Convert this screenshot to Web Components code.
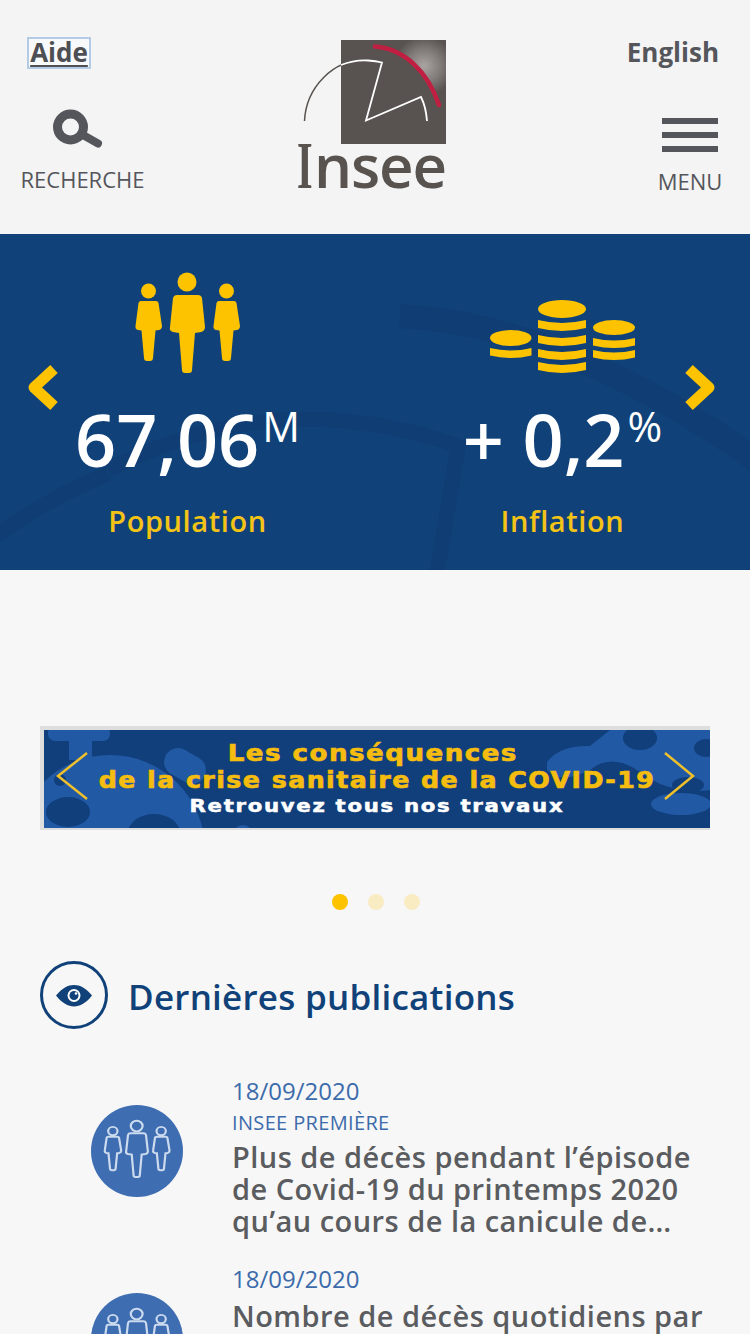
<!DOCTYPE html>
<html lang="fr">
<head>
<meta charset="utf-8">
<title>Insee</title>
<style>
html,body{margin:0;padding:0;height:1334px;overflow:hidden;background:#f7f7f7;font-family:"Open Sans",sans-serif}
insee-app{width:750px;height:1334px;overflow:hidden}
</style>
</head>
<body>
<insee-app>
  <insee-header></insee-header>
  <stat-banner>
    <stat-item kind="people" sup="M" value="67,06" label="Population"></stat-item>
    <stat-item kind="coins" sup="%" value="+ 0,2" label="Inflation"></stat-item>
  </stat-banner>
  <promo-carousel></promo-carousel>
  <section-title>Dernières publications</section-title>
  <pub-item date="18/09/2020" cat="INSEE PREMIÈRE">Plus de décès pendant l’épisode de Covid-19 du printemps 2020 qu’au cours de la canicule de…</pub-item>
  <pub-item date="18/09/2020">Nombre de décès quotidiens par</pub-item>
</insee-app>
<script>
const PEOPLE = `
<circle cx="187" cy="282" r="9.5"/>
<path d="M177 295H198Q201 295 202 298L205 327Q205 331 201 332L195 333L192 370Q192 373 189 373H185Q182 373 182 370L179 333L173 332Q169 331 170 327L173 298Q174 295 177 295Z"/>
<circle cx="148.500" cy="291" r="7.500"/>
<path d="M141 301H156Q158 301 158.500 303L162 326Q162 329 159 330L155.500 330.500L153 358Q153 361 150 361H147Q144 361 144 358L141.500 330.500L138 330Q135 329 135.500 326L138.500 303Q139 301 141 301Z"/>
<circle cx="226.500" cy="291" r="7.500"/>
<path d="M219 301H234Q236 301 236.500 303L240 326Q240 329 237 330L233.500 330.500L231 358Q231 361 228 361H225Q222 361 222 358L219.500 330.500L216 330Q213 329 213.500 326L216.500 303Q217 301 219 301Z"/>`;

function band(x0,x1,y0,y1,d){
  const c=(x0+x1)/2;
  return `M${x0} ${y0}Q${c} ${y0+d*2} ${x1} ${y0}V${y1-d}Q${c} ${y1+d} ${x0} ${y1-d}Z`;
}
function coinTop(x0,x1,y0,y1){
  const r=(x1-x0)/2,ry=(y1-y0)/2;
  return `<ellipse cx="${x0+r}" cy="${y0+ry}" rx="${r}" ry="${ry}"/>`;
}
const COINS = coinTop(538,586,300,318)+`<path d="${band(538,586,320,331,3)}"/><path d="${band(538,586,335,346,3)}"/><path d="${band(538,586,349,360,3)}"/><path d="${band(538,586,362,373,3)}"/>`
 + coinTop(490,531.500,330,346)+`<path d="${band(490,531.500,348,358,2.500)}"/>`
 + coinTop(593,635,320,335)+`<path d="${band(593,635,338,348,2.500)}"/><path d="${band(593,635,350,360,2.500)}"/>`;

class Base extends HTMLElement{
  render(html){ (this.shadowRoot||this.attachShadow({mode:"open"})).innerHTML = html; }
}

customElements.define("insee-app", class extends Base{
  connectedCallback(){ this.render(`<style>:host{display:block;color:#54565b}</style><slot></slot>`); }
});

customElements.define("insee-logo", class extends Base{
  connectedCallback(){ this.render(`<style>:host{display:block;width:160px;height:160px}svg{display:block;overflow:visible}
  text{font-family:"Open Sans",sans-serif;font-size:60px;font-weight:600;letter-spacing:-1.100px;fill:#58534f}
  text.i{font-family:"Liberation Serif",serif;font-size:67px;font-weight:700;letter-spacing:0}</style>
  <svg width="160" height="160" viewBox="292 35 160 160" role="img" aria-label="Insee">
    <defs>
      <radialGradient id="g" cx="424" cy="66" r="30" gradientUnits="userSpaceOnUse">
        <stop offset="0" stop-color="#aaa5a3"/><stop offset=".55" stop-color="#807b79"/><stop offset="1" stop-color="#585350"/>
      </radialGradient>
      <clipPath id="sq"><rect x="341" y="40" width="105" height="104"/></clipPath>
    </defs>
    <rect x="341" y="40" width="105" height="104" fill="#585350"/>
    <path d="M382 47Q414 52 439 106L446 106V40H382Z" fill="url(#g)" clip-path="url(#sq)"/>
    <path d="M304.500 121C306 88 333 58 368 60.500Q376 61 382 62.500" fill="none" stroke="#58534f" stroke-width="1.500"/>
    <path d="M341 65C351 61 360 60 368 60.500Q376 61 382 62.500L366 120.500L421 97Q426 107 427 121" fill="none" stroke="#fff" stroke-width="1.800"/>
    <path d="M375 46.500C405 49 428 72 439 105" fill="none" stroke="#c01f42" stroke-width="4.500" stroke-linecap="round"/>
    <text class="i" transform="translate(297 188) scale(.6 1)">I</text>
    <text x="314" y="188">nsee</text>
  </svg>`); }
});

customElements.define("insee-header", class extends Base{
  connectedCallback(){ this.render(`<style>
  :host{display:grid;grid-template-columns:165px 1fr 120px;height:234px;background:#f4f4f4;color:#54565b;font-family:"Open Sans",sans-serif;box-sizing:border-box}
  .l{display:flex;flex-direction:column;align-items:center}
  .aide{align-self:flex-start;margin:37px 0 0 27px;box-sizing:border-box;width:64px;height:32px;border:2px solid #b4cbe6;background:#f8f9fb;display:flex;align-items:center;justify-content:center;padding-bottom:2px;
    font-weight:700;font-size:26px;line-height:30px;text-decoration:underline;color:#4d4f54;text-decoration-thickness:2px;text-underline-offset:3px}
  .s{margin:39px 0 0 -10px;display:block;overflow:visible}
  .t{font-size:22px;line-height:30px;color:#54565b}
  .l .t{margin-top:16px}
  .c{display:flex;justify-content:flex-start;padding:40px 0 0 132px;width:161px}
  .r{display:flex;flex-direction:column;align-items:center}
  .en{align-self:flex-end;margin:36px 31px 0 0;font-weight:700;font-size:26px;line-height:32px;white-space:nowrap}
  .m{width:56px;margin-top:50px;display:flex;flex-direction:column;gap:8px}
  .m i{display:block;height:6px;background:#54565b}
  .t2{margin-top:14px}
  </style>
  <div class="l">
    <a class="aide">Aide</a>
    <svg class="s" width="50" height="40" viewBox="0 0 50 40"><circle cx="17.500" cy="19" r="13" fill="none" stroke="#54565b" stroke-width="9"/><path d="M30 27L45 35.500" stroke="#54565b" stroke-width="8" stroke-linecap="round"/></svg>
    <div class="t">RECHERCHE</div>
  </div>
  <div><div class="c"><insee-logo style="margin:-5px 0 0 -5px"></insee-logo></div></div>
  <div class="r">
    <div class="en">English</div>
    <div class="m"><i></i><i></i><i></i></div>
    <div class="t t2">MENU</div>
  </div>`); }
});

customElements.define("stat-banner", class extends Base{
  connectedCallback(){ this.render(`<style>
  :host{display:grid;grid-template-columns:375px 375px;height:336px;background:#104279;position:relative;overflow:hidden;margin-bottom:156px}
  svg{position:absolute;left:0;top:0}
  ::slotted(*){position:relative}
  </style>
  <svg width="750" height="336" viewBox="0 234 750 336">
    <g fill="none" stroke="#0f3d74" stroke-width="15">
      <path d="M-10 540Q48 498 108 474"/>
      <path d="M108 470Q240 402 375 425Q420 432 458 446L437 572"/>
      <path d="M400 316Q570 325 770 470" stroke-width="24"/>
    </g>
    <g fill="none" stroke="#fdc300" stroke-width="11" stroke-linejoin="round">
      <path d="M54 369L34 387.500L54 406"/>
      <path d="M689 369L709 387.500L689 406"/>
    </g>
  </svg>
  <slot></slot>`); }
});

customElements.define("stat-item", class extends Base{
  connectedCallback(){
    const k=this.getAttribute("kind");
    const art = k==="people"
      ? `<svg width="106" height="102" viewBox="135 272 106 102" fill="#fdc300">${PEOPLE}</svg>`
      : `<svg width="146" height="74" viewBox="490 300 146 74" fill="#fdc300">${COINS}</svg>`;
    this.render(`<style>
    :host{display:flex;flex-direction:column;align-items:center;font-family:"Open Sans",sans-serif}
    .i{height:102px;margin-top:38px;display:flex;align-items:flex-end}
    svg{display:block}
    .v{color:#fff;font-size:72px;font-weight:600;line-height:98px;margin-top:16px;white-space:nowrap;position:relative;display:flex}
    sup{font-size:42px;font-weight:400;line-height:42px;display:block;margin:15px 0 0 3px}
    .l{color:#f3c316;font-size:29px;font-weight:600;line-height:36px;margin-top:15px;letter-spacing:.6px}
    </style>
    <div class="i">${art}</div>
    <div class="v"><span>${this.getAttribute("value")}</span><sup>${this.getAttribute("sup")}</sup></div>
    <div class="l">${this.getAttribute("label")}</div>`);
  }
});

customElements.define("promo-carousel", class extends Base{
  connectedCallback(){ this.render(`<style>
  :host{display:block;font-family:"DejaVu Sans",sans-serif}
  .wrap{box-sizing:border-box;margin-left:40px;width:670px;height:104px;border:solid #dedede;border-width:4px 0 2px 4px;background:#113f7c;position:relative;overflow:hidden;
    display:flex;flex-direction:column;align-items:center;font-weight:700}
  svg{position:absolute;left:0;top:0}
  .a,.b,.c{position:relative;white-space:nowrap}
  .a,.b{color:#f5bd0f;font-size:23px;line-height:27px;letter-spacing:1.300px;-webkit-text-stroke:.7px #f5bd0f}
  .a{margin-top:10px;transform:translateX(-4px) scaleX(1.135)}
  .b{transform:scaleX(1.1)}
  .c{color:#fff;font-size:17px;line-height:24px;letter-spacing:1.350px;transform:scaleX(1.25);-webkit-text-stroke:.5px #fff}
  .dots{display:flex;gap:20px;justify-content:center;margin:64px 0 0 2px}
  .dots i{width:16px;height:16px;border-radius:50%;background:#f9ebc2}
  .dots i:first-child{background:#fdc300}
  </style>
  <div class="wrap">
    <svg width="666" height="98" viewBox="44 730 666 98">
      <rect x="44" y="730" width="666" height="98" fill="#113f7c"/>
      <g fill="#2159a4">
        <circle cx="110" cy="850" r="95"/>
        <rect x="69" y="730" width="23" height="30"/>
        <rect x="48" y="726" width="62" height="15" rx="7"/>
        <rect x="163" y="752" width="44" height="28" rx="14" transform="rotate(30 185 766)"/>
        <circle cx="243" cy="835" r="10"/>
        <path d="M547 762Q560 745 590 746L610 730H710V790Q670 795 640 772Q612 752 590 770Q560 785 547 770Z"/>
        <ellipse cx="681" cy="804" rx="30" ry="11"/>
      </g>
      <g fill="#113f7c">
        <ellipse cx="68" cy="812" rx="22" ry="15"/>
        <ellipse cx="154" cy="833" rx="26" ry="19"/>
        <circle cx="60" cy="780" r="6"/>
        <ellipse cx="640" cy="738" rx="17" ry="12"/>
        <ellipse cx="706" cy="748" rx="12" ry="9"/>
        <ellipse cx="688" cy="785" rx="16" ry="8"/>
      </g>
      <g fill="none" stroke="#f0c02c" stroke-width="2.500">
        <path d="M87 753L58 776L87 799"/>
        <path d="M665 753L693 776L665 799"/>
      </g>
    </svg>
    <div class="a">Les conséquences</div>
    <div class="b">de la crise sanitaire de la COVID-19</div>
    <div class="c">Retrouvez tous nos travaux</div>
  </div>
  <div class="dots"><i></i><i></i><i></i></div>`); }
});

customElements.define("section-title", class extends Base{
  connectedCallback(){ this.render(`<style>
  :host{display:flex;align-items:flex-start;gap:20px;margin:51px 0 0 40px;color:#104279;font-family:"Open Sans",sans-serif;font-size:35px;font-weight:600;line-height:68px;letter-spacing:.24px;height:68px}
  svg{display:block;flex:none}
  span{display:block;padding-top:2px}
  </style>
  <svg width="68" height="68" viewBox="0 0 68 68">
    <circle cx="34" cy="34" r="32.500" fill="none" stroke="#104279" stroke-width="3"/>
    <path d="M16 34.500C22 27 28 24 34 24S46 27 52 34.500C46 42 40 45.500 34 45.500S22 42 16 34.500Z" fill="#104279"/>
    <circle cx="34" cy="34.500" r="6.500" fill="#fff"/>
    <circle cx="34" cy="34.500" r="4.500" fill="#104279"/>
    <circle cx="36" cy="32.500" r="1.300" fill="#fff"/>
  </svg>
  <span><slot></slot></span>`); }
});

customElements.define("pub-item", class extends Base{
  connectedCallback(){
    const cat=this.getAttribute("cat");
    this.render(`<style>
    :host{display:grid;grid-template-columns:192px 1fr;margin-left:40px;width:680px;height:188px;font-family:"Open Sans",sans-serif}
    :host(:first-of-type){margin-top:49px}
    .p{width:92px;height:92px;margin:27px 0 0 51px;display:block}
    .d{color:#3c6bab;font-size:24px;line-height:26px}
    .k{color:#3c6bab;font-size:20px;line-height:28px;margin-top:5px;letter-spacing:.35px}
    .t{color:#5a5c60;font-size:29px;font-weight:600;line-height:32px;letter-spacing:.47px;max-width:476px;margin-top:${cat?'4':'8'}px}
    </style>
    <svg class="p" viewBox="0 0 92 92">
      <circle cx="46" cy="46" r="46" fill="#3e6db2"/>
      <g transform="translate(46 44) scale(.62 .56) translate(-187.500 -323)" fill="none" stroke="#cddbee" stroke-width="3.500">${PEOPLE}</g>
    </svg>
    <div>
      <div class="d">${this.getAttribute("date")}</div>
      ${cat?`<div class="k">${cat}</div>`:""}
      <div class="t"><slot></slot></div>
    </div>`);
  }
});
</script>
</body>
</html>
